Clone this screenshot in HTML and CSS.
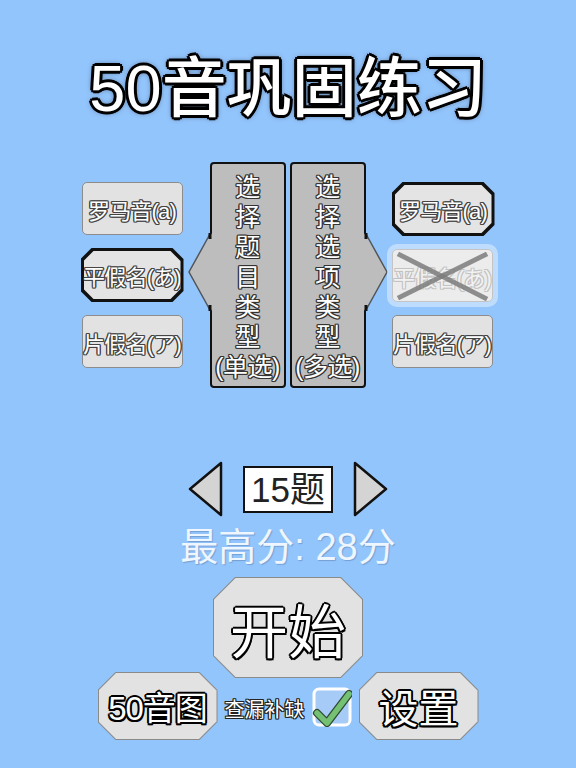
FILE: index.html
```html
<!DOCTYPE html>
<html lang="zh">
<head>
<meta charset="utf-8">
<title>50音巩固练习</title>
<link rel="stylesheet" href="styles.css">
</head>
<body>
<div class="page">
  <h1 class="title">50音巩固练习</h1>

  <div class="mid">
    <div class="col col-left">
      <div class="btn"><span class="btxt">罗马音(a)</span></div>
      <div class="oct oct-sel"><div class="oct-in"><span class="btxt">平假名(あ)</span></div></div>
      <div class="btn"><span class="btxt">片假名(ア)</span></div>
    </div>

    <div class="panel panel-left">
      <svg class="arrow arrow-l" width="24" height="78" viewBox="0 0 24 78">
        <polygon points="24,0 1,39 24,78" fill="#bdbdbd"/>
        <polyline points="22,1 1,39 22,77" fill="none" stroke="#555" stroke-width="1.5"/>
        <line x1="22" y1="0" x2="22" y2="6" stroke="#111" stroke-width="3"/>
        <line x1="22" y1="72" x2="22" y2="78" stroke="#111" stroke-width="3"/>
      </svg>
      <span class="pch">选</span>
      <span class="pch">择</span>
      <span class="pch">题</span>
      <span class="pch">目</span>
      <span class="pch">类</span>
      <span class="pch">型</span>
      <span class="pch">(单选)</span>
    </div>

    <div class="panel panel-right">
      <svg class="arrow arrow-r" width="24" height="78" viewBox="0 0 24 78">
        <polygon points="0,0 23,39 0,78" fill="#bdbdbd"/>
        <polyline points="2,1 23,39 2,77" fill="none" stroke="#555" stroke-width="1.5"/>
        <line x1="2" y1="0" x2="2" y2="6" stroke="#111" stroke-width="3"/>
        <line x1="2" y1="72" x2="2" y2="78" stroke="#111" stroke-width="3"/>
      </svg>
      <span class="pch">选</span>
      <span class="pch">择</span>
      <span class="pch">选</span>
      <span class="pch">项</span>
      <span class="pch">类</span>
      <span class="pch">型</span>
      <span class="pch">(多选)</span>
    </div>

    <div class="col col-right">
      <div class="oct oct-sel"><div class="oct-in"><span class="btxt">罗马音(a)</span></div></div>
      <div class="btn btn-dis">
        <span class="btxt btxt-dis">平假名(あ)</span>
        <svg class="cross" viewBox="0 0 101 53" preserveAspectRatio="none">
          <line x1="5" y1="4" x2="96" y2="51" stroke="#7d7d7d" stroke-width="5" stroke-opacity="0.85"/>
          <line x1="96" y1="4" x2="5" y2="50" stroke="#7d7d7d" stroke-width="5" stroke-opacity="0.85"/>
        </svg>
      </div>
      <div class="btn"><span class="btxt">片假名(ア)</span></div>
    </div>
  </div>

  <div class="counter">
    <svg class="tri" width="36" height="58" viewBox="0 0 36 58">
      <polygon points="34,3 3,29 34,55" fill="#d4d4d4" stroke="#111" stroke-width="2.5" stroke-linejoin="round"/>
    </svg>
    <div class="count-box">15题</div>
    <svg class="tri" width="36" height="58" viewBox="0 0 36 58">
      <polygon points="2,3 33,29 2,55" fill="#d4d4d4" stroke="#111" stroke-width="2.5" stroke-linejoin="round"/>
    </svg>
  </div>

  <div class="best">最高分: 28分</div>

  <div class="oct oct-big start">
    <div class="oct-in"><span class="big-txt">开始</span></div>
  </div>

  <div class="bottom">
    <div class="oct oct-small">
      <div class="oct-in"><span class="mid-txt mid-txt-s">50音图</span></div>
    </div>
    <span class="check-label">查漏补缺</span>
    <svg class="check" width="40" height="40" viewBox="0 0 40 40">
      <rect x="2" y="2" width="36" height="36" rx="5" fill="#a6cbf7" stroke="#fff" stroke-width="3"/>
      <path d="M5 26 L15 36 L37 7" fill="none" stroke="#2f4a2f" stroke-width="8" stroke-linecap="round" stroke-linejoin="round"/>
      <path d="M5 26 L15 36 L37 7" fill="none" stroke="#74c174" stroke-width="5.5" stroke-linecap="round" stroke-linejoin="round"/>
    </svg>
    <div class="oct oct-small">
      <div class="oct-in"><span class="mid-txt">设置</span></div>
    </div>
  </div>
</div>
</body>
</html>
```

FILE: styles.css
```css
html, body {
  margin: 0;
  padding: 0;
}

body {
  background: #93c5fd;
  font-family: "Liberation Sans", "Noto Sans CJK SC", sans-serif;
}

.page {
  width: 576px;
  height: 768px;
  display: flex;
  flex-direction: column;
  align-items: center;
  overflow: hidden;
}

.title {
  margin: 54px 0 0 0;
  height: 70px;
  line-height: 70px;
  font-size: 65px;
  font-weight: 500;
  color: #fff;
  white-space: nowrap;
  text-shadow:
    -2px -2px 0 #000, 2px -2px 0 #000, -2px 2px 0 #000, 2px 2px 0 #000,
    0 -3px 0 #000, 0 3px 0 #000, -3px 0 0 #000, 3px 0 0 #000,
    0 0 6px #222;
}

/* middle area */
.mid {
  margin-top: 38px;
  display: flex;
  align-items: center;
  height: 226px;
}

.col {
  display: flex;
  flex-direction: column;
  gap: 13px;
  width: 103px;
}

.col-left {
  margin-right: 25px;
}

.col-right {
  margin-left: 26px;
}

.btn {
  position: relative;
  box-sizing: border-box;
  width: 101px;
  height: 53px;
  border: 1px solid #8c8c8c;
  border-radius: 5px;
  background: #e2e2e2;
  display: flex;
  align-items: center;
  justify-content: center;
}

.btxt {
  font-size: 22px;
  color: #fff;
  white-space: nowrap;
  letter-spacing: -0.8px;
  text-shadow:
    -1px -1px 0 #444, 1px -1px 0 #444, -1px 1px 0 #444, 1px 1px 0 #444,
    0 -1.3px 0 #444, 0 1.3px 0 #444, -1.3px 0 0 #444, 1.3px 0 0 #444;
}

.btn-dis {
  background: #ececec;
  border-color: #c4c4c4;
  box-shadow: 0 0 0 5px rgba(225, 238, 255, 0.55);
}

.btxt-dis {
  color: #f2f2f2;
  text-shadow:
    -1px -1px 0 #c2c2c2, 1px -1px 0 #c2c2c2, -1px 1px 0 #c2c2c2, 1px 1px 0 #c2c2c2;
}

.cross {
  position: absolute;
  left: 0;
  top: 0;
  width: 100%;
  height: 100%;
}

/* octagons */
.oct {
  --c: 11px;
  --ci: 10px;
  --bw: 3px;
  box-sizing: border-box;
  padding: var(--bw);
  background: #111;
  clip-path: polygon(var(--c) 0, calc(100% - var(--c)) 0, 100% var(--c), 100% calc(100% - var(--c)), calc(100% - var(--c)) 100%, var(--c) 100%, 0 calc(100% - var(--c)), 0 var(--c));
}

.oct-in {
  width: 100%;
  height: 100%;
  background: #e4e4e4;
  display: flex;
  align-items: center;
  justify-content: center;
  clip-path: polygon(var(--ci) 0, calc(100% - var(--ci)) 0, 100% var(--ci), 100% calc(100% - var(--ci)), calc(100% - var(--ci)) 100%, var(--ci) 100%, 0 calc(100% - var(--ci)), 0 var(--ci));
}

.oct-sel {
  width: 103px;
  height: 54px;
}

.col-left .oct-sel {
  margin-left: -1px;
}

.oct-big {
  --c: 22px;
  --ci: 21.5px;
  --bw: 1px;
  background: #8a8a8a;
  width: 150px;
  height: 101px;
}

.oct-small {
  --c: 18px;
  --ci: 17.5px;
  --bw: 1px;
  background: #8a8a8a;
  width: 120px;
  height: 68px;
}

.oct-big .oct-in,
.oct-small .oct-in {
  background: #e2e2e2;
}

/* panels */
.panel {
  position: relative;
  box-sizing: border-box;
  width: 76px;
  height: 226px;
  border: 2px solid #111;
  border-radius: 4px;
  background: #bdbdbd;
  display: flex;
  flex-direction: column;
  align-items: center;
  padding-top: 8px;
}

.panel-right {
  margin-left: 4px;
}

.pch {
  font-size: 25px;
  line-height: 30px;
  height: 30px;
  color: #fff;
  white-space: nowrap;
  letter-spacing: -0.5px;
  text-shadow:
    -1px -1px 0 #333, 1px -1px 0 #333, -1px 1px 0 #333, 1px 1px 0 #333,
    0 -1.3px 0 #333, 0 1.3px 0 #333, -1.3px 0 0 #333, 1.3px 0 0 #333;
}

.arrow {
  position: absolute;
  top: 69px;
}

.arrow-l {
  left: -24px;
}

.arrow-r {
  right: -24px;
}

/* counter */
.counter {
  margin-top: 72px;
  height: 58px;
  display: flex;
  align-items: center;
  gap: 20px;
}

.count-box {
  box-sizing: border-box;
  width: 90px;
  height: 47px;
  border: 2px solid #111;
  background: #fff;
  color: #222;
  font-size: 35px;
  line-height: 43px;
  text-align: center;
  white-space: nowrap;
}

.best {
  margin-top: 9px;
  height: 40px;
  line-height: 40px;
  font-size: 38px;
  color: #eef6ff;
  white-space: nowrap;
  text-shadow: 1px 1px 1px rgba(60, 90, 130, 0.35);
}

.start {
  margin-top: 10px;
}

.big-txt {
  font-size: 58px;
  color: #fff;
  white-space: nowrap;
  text-shadow:
    -1.5px -1.5px 0 #000, 1.5px -1.5px 0 #000, -1.5px 1.5px 0 #000, 1.5px 1.5px 0 #000,
    0 -2px 0 #000, 0 2px 0 #000, -2px 0 0 #000, 2px 0 0 #000;
}

/* bottom row */
.bottom {
  margin-top: -6px;
  display: flex;
  align-items: center;
  gap: 7px;
}

.mid-txt {
  font-size: 40px;
  color: #fff;
  white-space: nowrap;
  text-shadow:
    -1.5px -1.5px 0 #000, 1.5px -1.5px 0 #000, -1.5px 1.5px 0 #000, 1.5px 1.5px 0 #000,
    0 -2px 0 #000, 0 2px 0 #000, -2px 0 0 #000, 2px 0 0 #000;
}

.mid-txt-s {
  font-size: 33px;
  letter-spacing: -1px;
}

.check-label {
  font-size: 20px;
  color: #fff;
  white-space: nowrap;
  margin-top: 4px;
  text-shadow:
    -1px -1px 0 #222, 1px -1px 0 #222, -1px 1px 0 #222, 1px 1px 0 #222,
    0 -1px 0 #222, 0 1px 0 #222, -1px 0 0 #222, 1px 0 0 #222;
}

.check {
  display: block;
  margin-top: 2px;
}
```
